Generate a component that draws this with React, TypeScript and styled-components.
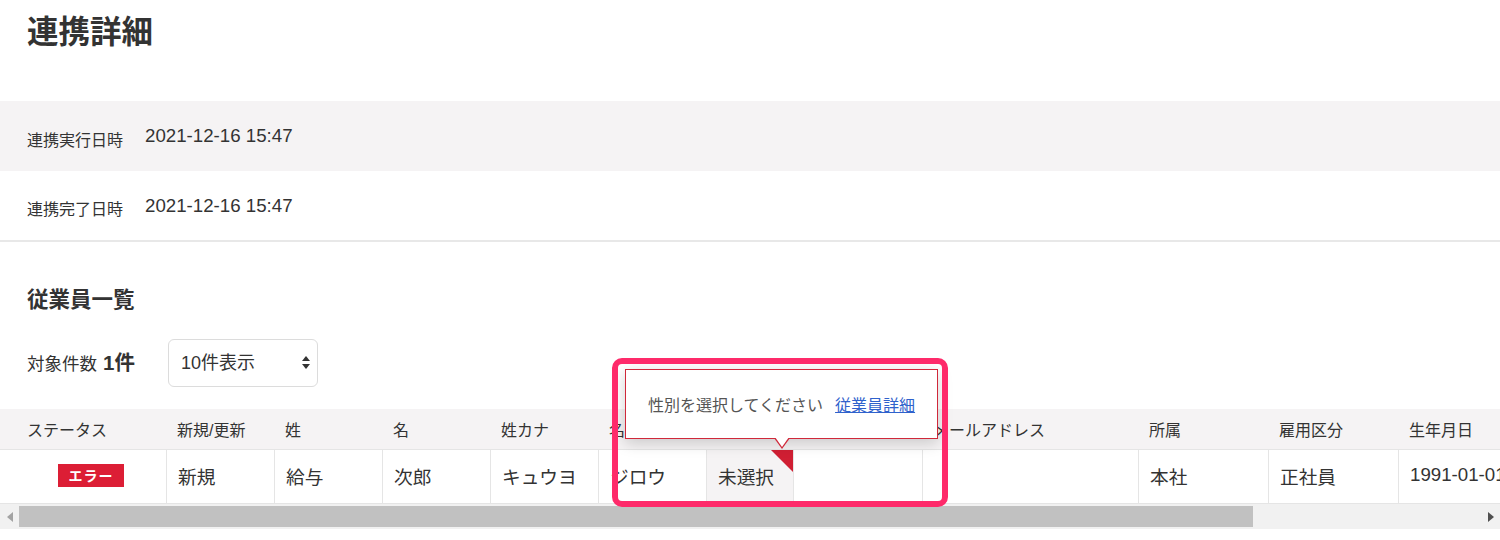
import styled, { createGlobalStyle } from 'styled-components';

const GlobalStyle = createGlobalStyle`
  html, body {
    margin: 0;
    padding: 0;
    background: #ffffff;
  }
  body {
    font-family: "Liberation Sans", "Noto Sans CJK JP", sans-serif;
    color: #333333;
    overflow: hidden;
  }
`;

const COLUMNS = '166px 108px 108px 108px 108px 108px 87px 129px 216px 130px 130px 130px';

const Page = styled.div`
  width: 1500px;
  min-height: 540px;
`;

const Title = styled.h1`
  margin: 12px 0 49px 27px;
  font-size: 31.5px;
  line-height: 40px;
  font-weight: 700;
  color: #333;
`;

const InfoList = styled.div`
  border-bottom: 2px solid #e8e8e8;
`;

const InfoRow = styled.div<{ $shaded?: boolean; $height: number }>`
  display: flex;
  align-items: center;
  height: ${p => p.$height}px;
  padding-left: 27px;
  background: ${p => (p.$shaded ? '#f5f3f4' : '#ffffff')};
`;

const InfoLabel = styled.span`
  width: 118px;
  padding-top: 9px;
  font-size: 16px;
  line-height: 20px;
`;

const InfoValue = styled.span`
  font-size: 18.7px;
  line-height: 22px;
`;

const Section = styled.section`
  margin-top: 43px;
`;

const SectionTitle = styled.h2`
  margin: 0 0 24px 27px;
  font-size: 21.5px;
  line-height: 30px;
  font-weight: 700;
`;

const Toolbar = styled.div`
  display: flex;
  align-items: center;
  padding-left: 27px;
  margin-bottom: 22px;
`;

const CountLabel = styled.div`
  width: 141px;
  font-size: 17.5px;
  line-height: 24px;

  strong {
    margin-left: 6px;
    font-size: 20.5px;
    font-weight: 700;
  }
`;

const SelectWrap = styled.div`
  position: relative;
  width: 150px;
  height: 48px;
`;

const Select = styled.select`
  appearance: none;
  width: 100%;
  height: 100%;
  box-sizing: border-box;
  padding: 0 30px 0 12px;
  border: 1px solid #dcdcdc;
  border-radius: 6px;
  background: #fff;
  font-family: inherit;
  font-size: 18px;
  color: #333;
  outline: none;
`;

const SelectArrows = styled.svg`
  position: absolute;
  right: 8px;
  top: 17px;
  pointer-events: none;
`;

const TableArea = styled.div`
  position: relative;
`;

const Viewport = styled.div`
  width: 1500px;
  overflow: hidden;
`;

const Row = styled.div<{ $head?: boolean }>`
  display: grid;
  grid-template-columns: ${COLUMNS};
  width: max-content;
  height: ${p => (p.$head ? 40 : 53)}px;
  background: ${p => (p.$head ? '#f5f3f4' : '#ffffff')};
  border-bottom: 1px solid #e5e5e5;
`;

const HeadCell = styled.div`
  display: flex;
  align-items: center;
  padding-left: 11px;
  font-size: 16px;
  white-space: nowrap;

  &:first-child {
    padding-left: 27px;
  }
`;

const Cell = styled.div<{ $invalid?: boolean }>`
  position: relative;
  display: flex;
  align-items: center;
  padding-left: 11px;
  padding-bottom: 3px;
  border-left: 1px solid #e5e5e5;
  font-size: 18.7px;
  white-space: nowrap;
  background: ${p => (p.$invalid ? '#f5f3f4' : 'transparent')};

  &:first-child {
    border-left: none;
    justify-content: center;
    padding-left: 16px;
  }

  ${p =>
    p.$invalid &&
    `
    &::after {
      content: '';
      position: absolute;
      top: 0;
      right: 0;
      border-top: 22px solid #d01f33;
      border-left: 22px solid transparent;
    }
  `}
`;

const StatusBadge = styled.span`
  display: inline-flex;
  align-items: center;
  justify-content: center;
  width: 66px;
  height: 23px;
  background: #dc1e35;
  color: #fff;
  font-size: 14px;
  font-weight: 700;
  letter-spacing: 1px;
`;

const Scrollbar = styled.div`
  display: flex;
  align-items: center;
  height: 25px;
  background: #f1f1f1;
`;

const ScrollButton = styled.div`
  display: flex;
  align-items: center;
  justify-content: center;
  width: 19px;
  height: 100%;
`;

const ScrollTrack = styled.div`
  flex: 1;
  height: 21px;
`;

const ScrollThumb = styled.div`
  width: 1234px;
  height: 100%;
  background: #c1c1c1;
`;

const Tooltip = styled.div`
  position: absolute;
  left: 625px;
  top: -40px;
  width: 313px;
  height: 70px;
  box-sizing: border-box;
  display: flex;
  align-items: center;
  padding-left: 22px;
  background: #fff;
  border: 1px solid #d0283a;
  box-shadow: 0 4px 14px rgba(0, 0, 0, 0.18);
  font-size: 16px;
  color: #555;

  &::before,
  &::after {
    content: '';
    position: absolute;
    left: 148px;
    border-left: 8px solid transparent;
    border-right: 8px solid transparent;
  }
  &::before {
    top: 100%;
    border-top: 11px solid #d0283a;
  }
  &::after {
    top: calc(100% - 1px);
    left: 149px;
    border-left-width: 7px;
    border-right-width: 7px;
    border-top: 10px solid #fff;
  }
`;

const TooltipLink = styled.a`
  margin-left: 12px;
  color: #2f62cc;
  text-decoration: underline;
`;

const Highlight = styled.div`
  position: absolute;
  left: 612px;
  top: -51px;
  width: 336px;
  height: 149px;
  box-sizing: border-box;
  border: 6px solid #fe2a6a;
  border-radius: 10px;
  pointer-events: none;
`;

const headers = [
  'ステータス', '新規/更新', '姓', '名', '姓カナ', '名カナ', '性別', '電話番号',
  'メールアドレス', '所属', '雇用区分', '生年月日',
];

const employee = ['新規', '給与', '次郎', 'キュウヨ', 'ジロウ', '未選択', '', '', '本社', '正社員', '1991-01-01'];

export default function App() {
  return (
    <Page>
      <GlobalStyle />
      <Title>連携詳細</Title>
      <InfoList>
        <InfoRow $shaded $height={70}>
          <InfoLabel>連携実行日時</InfoLabel>
          <InfoValue>2021-12-16 15:47</InfoValue>
        </InfoRow>
        <InfoRow $height={69}>
          <InfoLabel>連携完了日時</InfoLabel>
          <InfoValue>2021-12-16 15:47</InfoValue>
        </InfoRow>
      </InfoList>

      <Section>
        <SectionTitle>従業員一覧</SectionTitle>
        <Toolbar>
          <CountLabel>
            対象件数<strong>1件</strong>
          </CountLabel>
          <SelectWrap>
            <Select defaultValue="10">
              <option value="10">10件表示</option>
              <option value="20">20件表示</option>
              <option value="50">50件表示</option>
            </Select>
            <SelectArrows width="8" height="13" viewBox="0 0 8 13">
              <path d="M4 0 L8 5 L0 5 Z" fill="#333" />
              <path d="M0 8 L8 8 L4 13 Z" fill="#333" />
            </SelectArrows>
          </SelectWrap>
        </Toolbar>

        <TableArea>
          <Viewport>
            <Row $head>
              {headers.map(h => (
                <HeadCell key={h}>{h}</HeadCell>
              ))}
            </Row>
            <Row>
              <Cell>
                <StatusBadge>エラー</StatusBadge>
              </Cell>
              {employee.map((value, i) => (
                <Cell key={i} $invalid={value === '未選択'}>
                  {value}
                </Cell>
              ))}
            </Row>
          </Viewport>
          <Scrollbar>
            <ScrollButton>
              <svg width="6" height="10" viewBox="0 0 6 10">
                <path d="M6 0 L0 5 L6 10 Z" fill="#a3a3a3" />
              </svg>
            </ScrollButton>
            <ScrollTrack>
              <ScrollThumb />
            </ScrollTrack>
            <ScrollButton>
              <svg width="6" height="10" viewBox="0 0 6 10">
                <path d="M0 0 L6 5 L0 10 Z" fill="#505050" />
              </svg>
            </ScrollButton>
          </Scrollbar>

          <Tooltip>
            性別を選択してください
            <TooltipLink href="#">従業員詳細</TooltipLink>
          </Tooltip>
          <Highlight />
        </TableArea>
      </Section>
    </Page>
  );
}
